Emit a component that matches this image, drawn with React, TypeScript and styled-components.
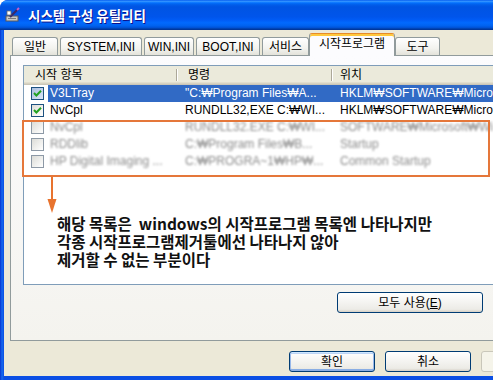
import React from "react";
import styled, { createGlobalStyle, css } from "styled-components";

const GlobalStyle = createGlobalStyle`
  html, body { margin: 0; padding: 0; overflow: hidden; background: #fff; }
  body {
    font-family: "Liberation Sans", "Noto Sans CJK KR", sans-serif;
    font-size: 12px;
    color: #000;
  }
`;

const Window = styled.div`
  width: 576px;
  height: 380px;
  display: flex;
  flex-direction: column;
  background: #0a4ee4;
  border-radius: 8px 8px 0 0;
  overflow: hidden;
`;

const TitleBar = styled.div`
  height: 30px;
  flex-shrink: 0;
  display: flex;
  align-items: center;
  gap: 7px;
  padding-left: 5px;
  background: linear-gradient(
    180deg,
    #0058ee 0%,
    #3593ff 4%,
    #288eff 6%,
    #127dff 8%,
    #036ffc 10%,
    #0262ee 14%,
    #0057e5 20%,
    #0054e3 24%,
    #0055eb 56%,
    #005bf5 66%,
    #026afe 76%,
    #0062ef 86%,
    #0052d6 92%,
    #0040ab 96%,
    #003092 100%
  );
`;

const Title = styled.span`
  font-family: "Noto Sans CJK KR", sans-serif;
  font-weight: 700;
  font-size: 13.5px;
  line-height: 16px;
  color: #fff;
  text-shadow: 1px 1px 0 #0f1089;
`;

const Frame = styled.div`
  flex: 1;
  display: flex;
  min-width: 0;
  padding: 0 4px 4px 4px;
  background: linear-gradient(90deg, #0832d0, #166aee 2px, #0a4ee4 4px);
`;

const Body = styled.div`
  flex: 1;
  min-width: 0;
  display: flex;
  flex-direction: column;
  background: #ece9d8;
  padding: 3px 6px 0 6px;
`;

const TabStrip = styled.div`
  height: 22px;
  display: flex;
  align-items: flex-end;
  padding-left: 2px;
`;

const Tab = styled.div<{ $w: number; $active?: boolean }>`
  width: ${(p) => p.$w}px;
  height: 18px;
  box-sizing: border-box;
  display: flex;
  align-items: center;
  justify-content: center;
  margin-right: 2px;
  border: 1px solid #919b9c;
  border-bottom: none;
  border-radius: 3px 3px 0 0;
  background: linear-gradient(180deg, #fff, #f3f3ef 60%, #e3e2da);
  line-height: 14px;
  white-space: nowrap;
  ${(p) =>
    p.$active &&
    css`
      position: relative;
      z-index: 1;
      height: 23px;
      margin: 0 0 -1px -2px;
      padding-bottom: 3px;
      border-top-color: #e68b2c;
      background: #fcfcfe;
      box-shadow: inset 0 2px 0 #ffc83c;
    `}
`;

const Panel = styled.div`
  height: 286px;
  box-sizing: border-box;
  display: flex;
  flex-direction: column;
  border: 1px solid #919b9c;
  background: linear-gradient(180deg, #fcfcfe, #f4f3ee);
  padding: 9px 12px 0 12px;
`;

const ListView = styled.div`
  height: 220px;
  box-sizing: border-box;
  position: relative;
  display: flex;
  flex-direction: column;
  border: 1px solid #7f9db9;
  background: #fff;
`;

const Header = styled.div`
  height: 19px;
  flex-shrink: 0;
  display: flex;
  background: #ebeadb;
  box-shadow: inset 0 -1px 0 #cbc7b8, inset 0 -2px 0 #d6d2c2,
    inset 0 -3px 0 #e2decd;
`;

const HeaderCell = styled.div<{ $w?: number; $pad: number }>`
  position: relative;
  ${(p) => (p.$w ? `width: ${p.$w}px; flex-shrink: 0;` : "flex: 1; min-width: 0;")}
  box-sizing: border-box;
  padding: 2px 0 0 ${(p) => p.$pad}px;
  line-height: 14px;
  &::after {
    content: "";
    position: absolute;
    right: 0;
    top: 3px;
    bottom: 4px;
    width: 1px;
    background: #aca899;
    box-shadow: 1px 0 0 #fff;
  }
`;

const Row = styled.div<{ $muted?: boolean }>`
  height: 17px;
  flex-shrink: 0;
  display: flex;
  align-items: center;
  ${(p) =>
    p.$muted &&
    css`
      color: #8c8c8c;
    `}
`;

const CheckCell = styled.div`
  width: 24px;
  flex-shrink: 0;
  display: flex;
  align-items: center;
  padding-left: 7px;
  box-sizing: border-box;
`;

const Box = styled.div<{ $hot?: boolean; $muted?: boolean }>`
  width: 13px;
  height: 13px;
  box-sizing: border-box;
  border: 1px solid ${(p) => (p.$muted ? "#8d99a6" : "#1c5180")};
  background: ${(p) =>
    p.$hot
      ? "linear-gradient(135deg, #a9bedf, #dbe6f6)"
      : "linear-gradient(135deg, #dcdcd7, #ffffff)"};
  display: flex;
  align-items: center;
  justify-content: center;
`;

const Selection = styled.div<{ $on?: boolean; $muted?: boolean }>`
  flex: 1;
  height: 17px;
  display: flex;
  align-items: center;
  min-width: 0;
  ${(p) =>
    p.$on &&
    css`
      background: #316ac5;
      color: #fff;
    `}
  ${(p) =>
    p.$muted &&
    css`
      filter: blur(0.9px);
    `}
`;

const Cell = styled.div<{ $w?: number; $pad: number }>`
  ${(p) => (p.$w ? `width: ${p.$w}px; flex-shrink: 0;` : "flex: 1; min-width: 0;")}
  box-sizing: border-box;
  padding-left: ${(p) => p.$pad}px;
  white-space: nowrap;
  overflow: hidden;
  line-height: 15px;
`;

const Highlight = styled.div`
  position: absolute;
  left: -2px;
  top: 54px;
  width: 468px;
  height: 57px;
  box-sizing: border-box;
  border: 2px solid #e5773a;
  pointer-events: none;
`;

const Arrow = styled.svg`
  display: block;
  margin: 7px 0 0 22px;
`;

const Note = styled.div`
  margin: 0 0 0 33px;
  font-family: "Noto Sans CJK KR", sans-serif;
  font-weight: 700;
  font-size: 15.5px;
  line-height: 18px;
  color: #111;
  white-space: pre;
`;

const PanelButtons = styled.div`
  display: flex;
  justify-content: flex-end;
  margin: 7px 70px 0 0;
`;

const Button = styled.button<{ $w: number; $default?: boolean; $off?: boolean }>`
  width: ${(p) => p.$w}px;
  height: 21px;
  flex-shrink: 0;
  box-sizing: border-box;
  padding: 0;
  border: 1px solid #003c74;
  border-radius: 3px;
  background: linear-gradient(180deg, #fff, #ecebe6 86%, #d6d0c5);
  font-family: "Liberation Sans", "Noto Sans CJK KR", sans-serif;
  font-size: 12px;
  line-height: 14px;
  color: #000;
  ${(p) =>
    p.$default &&
    css`
      box-shadow: inset 0 1px 0 #cee7ff, inset 0 -1px 0 #89ade4,
        inset 1px 0 0 #98b8ea, inset -1px 0 0 #98b8ea, inset 0 2px 0 #bcd4f6,
        inset 0 -2px 0 #89ade4;
    `}
  ${(p) =>
    p.$off &&
    css`
      border-color: #c9c7ba;
      background: #f5f4ea;
      color: #aca899;
    `}
`;

const Under = styled.span`
  text-decoration: underline;
`;

const DialogButtons = styled.div`
  display: flex;
  justify-content: flex-start;
  gap: 10px;
  margin-top: 10px;
  padding-left: 279px;
`;

const ToolIcon = () => (
  <svg width="16" height="16" viewBox="0 0 16 16">
    <rect x="1" y="9" width="12" height="5" fill="#c9c9c9" stroke="#5a5a5a" strokeWidth="1" />
    <rect x="3" y="11" width="8" height="1" fill="#7a7a7a" />
    <path d="M5 10 L13 2" stroke="#3a2a6a" strokeWidth="2.2" />
    <path d="M12 3 L14 1" stroke="#c060d0" strokeWidth="2" />
    <rect x="2" y="4" width="4" height="4" fill="#fff" stroke="#6a6a6a" strokeWidth="0.8" />
  </svg>
);

const Check = () => (
  <svg width="9" height="9" viewBox="0 0 9 9">
    <path d="M1 4 L3.4 6.5 L8 1.8" fill="none" stroke="#21a121" strokeWidth="2" />
  </svg>
);

type Item = {
  name: string;
  cmd: string;
  loc: string;
  checked?: boolean;
  selected?: boolean;
  muted?: boolean;
};

const items: Item[] = [
  { name: "V3LTray", cmd: "\"C:₩Program Files₩A...", loc: "HKLM₩SOFTWARE₩Micro", checked: true, selected: true },
  { name: "NvCpl", cmd: "RUNDLL32,EXE C:₩WI...", loc: "HKLM₩SOFTWARE₩Micro", checked: true },
  { name: "NvCpl", cmd: "RUNDLL32.EXE C:₩WI...", loc: "SOFTWARE₩Microsoft₩Wi", muted: true },
  { name: "RDDlib", cmd: "C:₩Program Files₩B...", loc: "Startup", muted: true },
  { name: "HP Digital Imaging ...", cmd: "C:₩PROGRA~1₩HP₩...", loc: "Common Startup", muted: true },
];

const tabs = [
  { label: "일반", w: 46 },
  { label: "SYSTEM,INI", w: 82 },
  { label: "WIN,INI", w: 50 },
  { label: "BOOT,INI", w: 64 },
  { label: "서비스", w: 47 },
  { label: "시작프로그램", w: 86, active: true },
  { label: "도구", w: 45 },
];

const App: React.FC = () => (
  <>
    <GlobalStyle />
    <Window>
      <TitleBar>
        <ToolIcon />
        <Title>시스템 구성 유틸리티</Title>
      </TitleBar>
      <Frame>
        <Body>
          <TabStrip>
            {tabs.map((t) => (
              <Tab key={t.label} $w={t.w} $active={t.active}>
                {t.label}
              </Tab>
            ))}
          </TabStrip>
          <Panel>
            <ListView>
              <Header>
                <HeaderCell $w={153} $pad={11}>시작 항목</HeaderCell>
                <HeaderCell $w={155} $pad={11}>명령</HeaderCell>
                <HeaderCell $pad={8}>위치</HeaderCell>
              </Header>
              {items.map((it, i) => (
                <Row key={i} $muted={it.muted}>
                  <CheckCell>
                    <Box $hot={it.selected} $muted={it.muted}>
                      {it.checked && <Check />}
                    </Box>
                  </CheckCell>
                  <Selection $on={it.selected} $muted={it.muted}>
                    <Cell $w={129} $pad={2}>{it.name}</Cell>
                    <Cell $w={155} $pad={8}>{it.cmd}</Cell>
                    <Cell $pad={8}>{it.loc}</Cell>
                  </Selection>
                </Row>
              ))}
              <Highlight />
              <Arrow width="12" height="37" viewBox="0 0 12 37">
                <path d="M6 0 V26" stroke="#e8732e" strokeWidth="2" />
                <path d="M1.5 22 L10.5 22 L6 36 Z" fill="#e8732e" />
              </Arrow>
              <Note>
                {"해당 목록은  windows의 시작프로그램 목록엔 나타나지만\n각종 시작프로그램제거툴에선 나타나지 않아\n제거할 수 없는 부분이다"}
              </Note>
            </ListView>
            <PanelButtons>
              <Button $w={146}>
                모두 사용(<Under>E</Under>)
              </Button>
            </PanelButtons>
          </Panel>
          <DialogButtons>
            <Button $w={86} $default>
              확인
            </Button>
            <Button $w={86}>취소</Button>
            <Button $w={86} $off>
              적용(A)
            </Button>
          </DialogButtons>
        </Body>
      </Frame>
    </Window>
  </>
);

export default App;
